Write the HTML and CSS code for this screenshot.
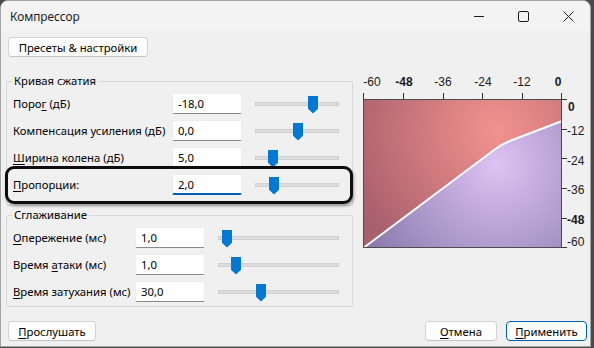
FILE: index.html
```html
<!DOCTYPE html>
<html>
<head lang="ru">
<meta charset="UTF-8">
<title>Компрессор</title>
<link rel="stylesheet" href="styles.css">
</head>
<body>
<div class="window">
  <div class="titlebar">
    <span class="title">Компрессор</span>
    <div class="controls">
      <span class="ctl min"><svg width="10" height="10"><line x1="0" y1="5.5" x2="10" y2="5.5"/></svg></span>
      <span class="ctl max"><svg width="11" height="11"><rect x="0.5" y="0.5" width="10" height="10" rx="1.5"/></svg></span>
      <span class="ctl close"><svg width="11" height="11"><path d="M0.5 0.5 L10.5 10.5 M10.5 0.5 L0.5 10.5"/></svg></span>
    </div>
  </div>

  <button class="btn presets">Пресеты &amp; настройки</button>

  <div class="main">
    <div class="groups">
      <fieldset class="group curve">
        <legend>Кривая сжатия</legend>
        <div class="row">
          <span class="label">Поро<u>г</u> (дБ)</span>
          <span class="field">-18,0</span>
          <span class="slider"><span class="thumb" style="left:52px"></span></span>
        </div>
        <div class="row">
          <span class="label">Компенсация усиления (дБ)</span>
          <span class="field">0,0</span>
          <span class="slider"><span class="thumb" style="left:37px"></span></span>
        </div>
        <div class="row">
          <span class="label"><u>Ш</u>ирина колена (дБ)</span>
          <span class="field">5,0</span>
          <span class="slider"><span class="thumb" style="left:12px"></span></span>
        </div>
        <div class="row">
          <span class="label"><u>П</u>ропорции:</span>
          <span class="field focused">2,0</span>
          <span class="slider"><span class="thumb" style="left:13px"></span></span>
        </div>
      </fieldset>

      <fieldset class="group smooth">
        <legend>Сглаживание</legend>
        <div class="row">
          <span class="label"><u>О</u>пережение (мс)</span>
          <span class="field">1,0</span>
          <span class="slider"><span class="thumb" style="left:3px"></span></span>
        </div>
        <div class="row">
          <span class="label">Время <u>а</u>таки (мс)</span>
          <span class="field">1,0</span>
          <span class="slider"><span class="thumb" style="left:12px"></span></span>
        </div>
        <div class="row">
          <span class="label"><u>В</u>ремя затухания (мс)</span>
          <span class="field">30,0</span>
          <span class="slider"><span class="thumb" style="left:37px"></span></span>
        </div>
      </fieldset>
    </div>

    <svg class="graph" width="230" height="190" viewBox="355 70 230 190">
      <defs>
        <radialGradient id="red" gradientUnits="userSpaceOnUse" cx="497" cy="130" r="155">
          <stop offset="0" stop-color="#f3928e"/>
          <stop offset="1" stop-color="#a8606d"/>
        </radialGradient>
        <radialGradient id="lilac" gradientUnits="userSpaceOnUse" cx="497" cy="165" r="155">
          <stop offset="0" stop-color="#dcc3f4"/>
          <stop offset="1" stop-color="#8877a9"/>
        </radialGradient>
      </defs>
      <rect x="363" y="99" width="199" height="149" fill="url(#red)"/>
      <path d="M363 248 L494 150 Q502 144 511 140.5 L562 121 V248 Z" fill="url(#lilac)"/>
      <path d="M364 247.5 L494 150 Q502 144 511 140.5 L561.5 121.2" class="curve-line"/>
      <rect x="363.5" y="99.5" width="198" height="148" class="frame"/>
      <path class="ticks" d="M363.5 93 V99 M403.5 93 V99 M443.5 93 V99 M482.5 93 V99 M522.5 93 V99 M561.5 93 V99
        M562 99.5 H567 M562 129.5 H567 M562 158.5 H567 M562 188.5 H567 M562 218.5 H567 M562 247.5 H567"/>
      <g class="axis top">
        <text x="372" y="86">-60</text>
        <text x="404" y="86" class="b">-48</text>
        <text x="443" y="86">-36</text>
        <text x="483" y="86">-24</text>
        <text x="522" y="86">-12</text>
        <text x="558" y="86" class="b">0</text>
      </g>
      <g class="axis right">
        <text x="568" y="111" class="b">0</text>
        <text x="567" y="134.5">-12</text>
        <text x="567" y="165">-24</text>
        <text x="567" y="193.5">-36</text>
        <text x="567" y="223.5" class="b">-48</text>
        <text x="567" y="245.5">-60</text>
      </g>
    </svg>
  </div>

  <div class="footer">
    <button class="btn"><u>П</u>рослушать</button>
    <div class="actions">
      <button class="btn cancel"><u>О</u>тмена</button>
      <button class="btn apply"><u>П</u>рименить</button>
    </div>
  </div>

  <div class="highlight"></div>
</div>
</body>
</html>
```

FILE: styles.css
```css
html, body {
  margin: 0;
  padding: 0;
}

body {
  background-color: #4b4b4d;
  width: 594px;
  height: 348px;
  overflow: hidden;
  font-family: "Noto Sans", "Open Sans", sans-serif;
  font-size: 11.3px;
  color: #000;
}

.window {
  position: relative;
  box-sizing: border-box;
  width: 591px;
  height: 347px;
  background-color: #f0f0f0;
  border: 1px solid #a3a3a3;
  border-radius: 8px 8px 0 0;
  overflow: hidden;
}

.titlebar {
  height: 30px;
  display: flex;
  align-items: center;
  justify-content: space-between;
  background-color: #f3f3f3;
}

.title {
  padding-left: 9px;
  color: #1b1b1b;
  font-size: 11.8px;
  line-height: 16px;
}

.controls {
  display: flex;
  height: 30px;
}

.ctl {
  display: flex;
  align-items: center;
  justify-content: center;
  width: 45px;
  height: 30px;
}

.ctl svg {
  fill: none;
  stroke: #1c1c1c;
  stroke-width: 1;
}

.ctl.close {
  width: 44px;
}

.ctl.min svg {
  margin-top: -1px;
}

.btn {
  box-sizing: border-box;
  height: 20px;
  padding: 0 6px;
  font-family: "Noto Sans", "Open Sans", sans-serif;
  font-size: 11.3px;
  line-height: 17px;
  white-space: nowrap;
  color: #000;
  background-color: #fdfdfd;
  border: 1px solid #d3d3d3;
  border-bottom-color: #c4c4c4;
  border-radius: 4px;
}

.presets {
  display: block;
  margin: 6px 0 0 7px;
  width: 140px;
}

.main {
  display: flex;
  align-items: flex-start;
  margin-top: 13px;
}

.groups {
  margin-left: 5px;
  width: 347px;
}

.group {
  box-sizing: border-box;
  width: 347px;
  margin: 0;
  min-inline-size: 0;
  border: 1px solid #d8d8d8;
  border-radius: 2px;
}

.group legend {
  padding: 0 2px;
  margin-left: -1px;
  line-height: 16px;
}

.curve {
  margin-top: 3px;
  padding: 4px 6px 10px 6px;
}

.smooth {
  margin-top: 1px;
  padding: 4px 6px 4px 6px;
}

.row {
  display: grid;
  align-items: center;
  column-gap: 13px;
  height: 21px;
  margin-bottom: 6px;
}

.row:last-child {
  margin-bottom: 0;
}

.curve .row {
  grid-template-columns: 146px 70px 84px;
}

.smooth .row {
  grid-template-columns: 109px 70px 121px;
}

.label {
  white-space: nowrap;
  line-height: 16px;
}

.label u, .btn u {
  text-underline-offset: 2px;
}

.field {
  box-sizing: border-box;
  height: 21px;
  padding: 0 5px;
  line-height: 19px;
  background-color: #fff;
  border: 1px solid #ececec;
  border-bottom-color: #8a8a8a;
  border-radius: 2px;
}

.field.focused {
  border-bottom: 2px solid #005fb8;
}

.slider {
  position: relative;
  height: 4px;
  background-color: #dddddd;
  border: 1px solid #d0d0d0;
  box-sizing: border-box;
}

.thumb {
  position: absolute;
  top: -7px;
  width: 10px;
  height: 18px;
  background-color: #0078d4;
  clip-path: polygon(0 0, 100% 0, 100% 74%, 50% 100%, 0 74%);
}

.graph {
  display: block;
  margin-left: 2px;
}

.curve-line {
  fill: none;
  stroke: #fff;
  stroke-width: 2;
}

.frame {
  fill: none;
  stroke: #4d4d4d;
  stroke-width: 1;
}

.ticks {
  fill: none;
  stroke: #333;
  stroke-width: 1;
}

.axis text {
  font-family: "Liberation Sans", Arial, sans-serif;
  font-size: 12px;
  fill: #1a1a1a;
}

.axis.top text {
  text-anchor: middle;
}

.axis text.b {
  font-weight: bold;
}

.footer {
  display: flex;
  justify-content: space-between;
  margin: 14px 3px 0 7px;
}

.footer .btn {
  width: 88px;
}

.actions {
  display: flex;
  gap: 9px;
}

.footer .cancel {
  width: 72px;
}

.footer .apply {
  width: 81px;
  border: 1px solid #005fb8;
}

.highlight {
  position: absolute;
  left: 4px;
  top: 165px;
  width: 348px;
  height: 38px;
  box-sizing: border-box;
  border: 3px solid #0d0d0d;
  border-radius: 9px;
  box-shadow: 1px 2px 3px rgba(0, 0, 0, 0.35);
}
```
